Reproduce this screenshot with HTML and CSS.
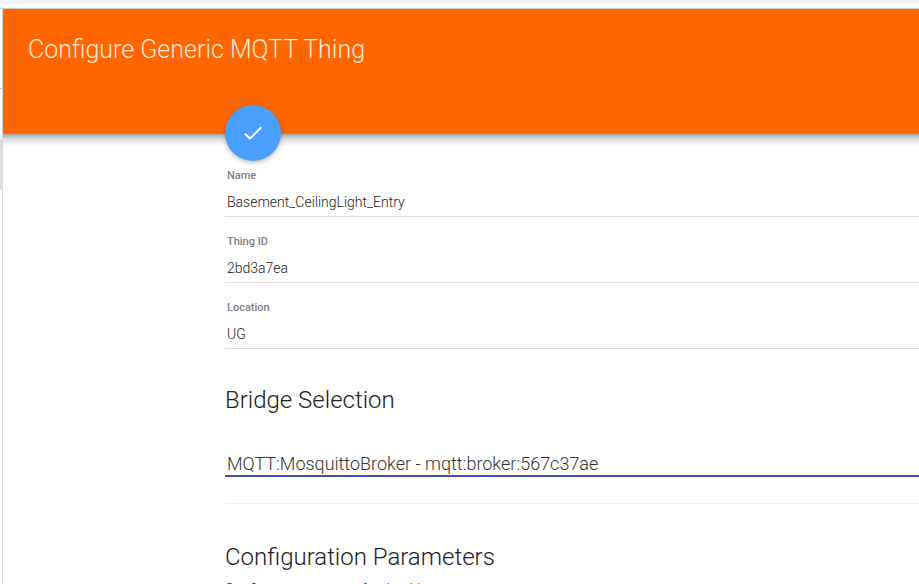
FILE: index.html
```html
<!DOCTYPE html>
<html lang="en">
<head>
<meta charset="utf-8">
<title>Configure Generic MQTT Thing</title>
<link rel="stylesheet" href="styles.css">
</head>
<body>
<div class="topbar"></div>
<div class="shell">
  <aside class="rail"><div class="rail-head"></div><div class="rail-item"></div></aside>
  <main class="page">
    <header class="header">
      <h1>Configure Generic MQTT Thing</h1>
      <button class="fab" type="submit" form="thing" aria-label="Save">
        <svg viewBox="0 0 24 24" width="24" height="24" aria-hidden="true"><path fill="#fff" d="M9 16.17 4.83 12l-1.42 1.41L9 19 21 7l-1.41-1.41z"/></svg>
      </button>
    </header>
    <form class="content" id="thing">
      <div class="field"><label for="name">Name</label><input id="name" value="Basement_CeilingLight_Entry"></div>
      <div class="field"><label for="uid">Thing ID</label><input id="uid" value="2bd3a7ea"></div>
      <div class="field"><label for="location">Location</label><input id="location" value="UG"></div>
      <section class="bridge">
        <h2 id="bridge-title">Bridge Selection</h2>
        <select aria-labelledby="bridge-title"><option>MQTT:MosquittoBroker - mqtt:broker:567c37ae</option></select>
      </section>
      <section class="params">
        <h2>Configuration Parameters</h2>
        <p>Configure parameters for the thing.</p>
      </section>
    </form>
  </main>
</div>
</body>
</html>
```
FILE: styles.css
```css
* { box-sizing: border-box; }
html, body { height: 100%; }
body {
  margin: 0;
  display: flex;
  flex-direction: column;
  overflow: hidden;
  background: #fff;
  color: #212121;
  font-family: Roboto, sans-serif;
  font-weight: 300;
}
.topbar {
  flex: none;
  height: 9px;
  background: #fff;
  border-top: 4px solid #f1f3f6;
  border-bottom: 1px solid #ccc;
}
.shell { flex: 1; min-height: 0; display: flex; }
.rail { flex: none; width: 3px; border-right: 1px solid #d8d8dc; }
.rail-head { height: 80px; border-bottom: 1px solid #c4c4c4; }
.rail-item { height: 50px; margin-top: 50px; background: #ddd; }
.page { flex: 1; min-width: 0; }
.header {
  position: relative;
  height: 125px;
  padding: 25px;
  background: #f60;
}
.header::after {
  content: "";
  position: absolute;
  top: 100%;
  left: 0;
  right: 0;
  height: 12px;
  background: linear-gradient(rgba(0, 0, 0, .34), rgba(0, 0, 0, .12) 45%, transparent);
}
h1, h2 { margin: 0; font-weight: 300; font-size: 24px; line-height: 32px; }
h1 { color: rgba(255, 255, 255, .87); font-size: 25px; }
.fab {
  position: absolute;
  z-index: 1;
  left: 222px;
  bottom: -27px;
  width: 56px;
  height: 56px;
  padding: 0;
  display: grid;
  place-items: center;
  border: 0;
  border-radius: 50%;
  background: #4b9ffc;
  box-shadow: 0 2px 5px rgba(0, 0, 0, .26);
}
.content { padding: 33px 0 0 222px; }
.field { height: 66px; }
.field label {
  display: block;
  padding-left: 2px;
  font-size: 11px;
  line-height: 18px;
  font-weight: 500;
  color: #808080;
}
.field input, select {
  display: block;
  width: 100%;
  border: 0;
  border-radius: 0;
  outline: 0;
  background: transparent;
  font-family: inherit;
  font-weight: 300;
}
.field input {
  height: 32px;
  padding: 2px 2px 0;
  border-bottom: 1px solid #ddd;
  font-size: 14px;
  color: #212121;
}
.bridge { padding-top: 19px; border-bottom: 1px solid #eee; }
select {
  height: 28px;
  margin: 33px 0 26px;
  padding: 2px 2px 0;
  appearance: none;
  border-bottom: 2px solid #3f51b5;
  font-size: 18px;
  color: #333;
}
.params { padding-top: 37px; }
.params p { margin: 4px 0 0; font-size: 14px; line-height: 24px; }
```
